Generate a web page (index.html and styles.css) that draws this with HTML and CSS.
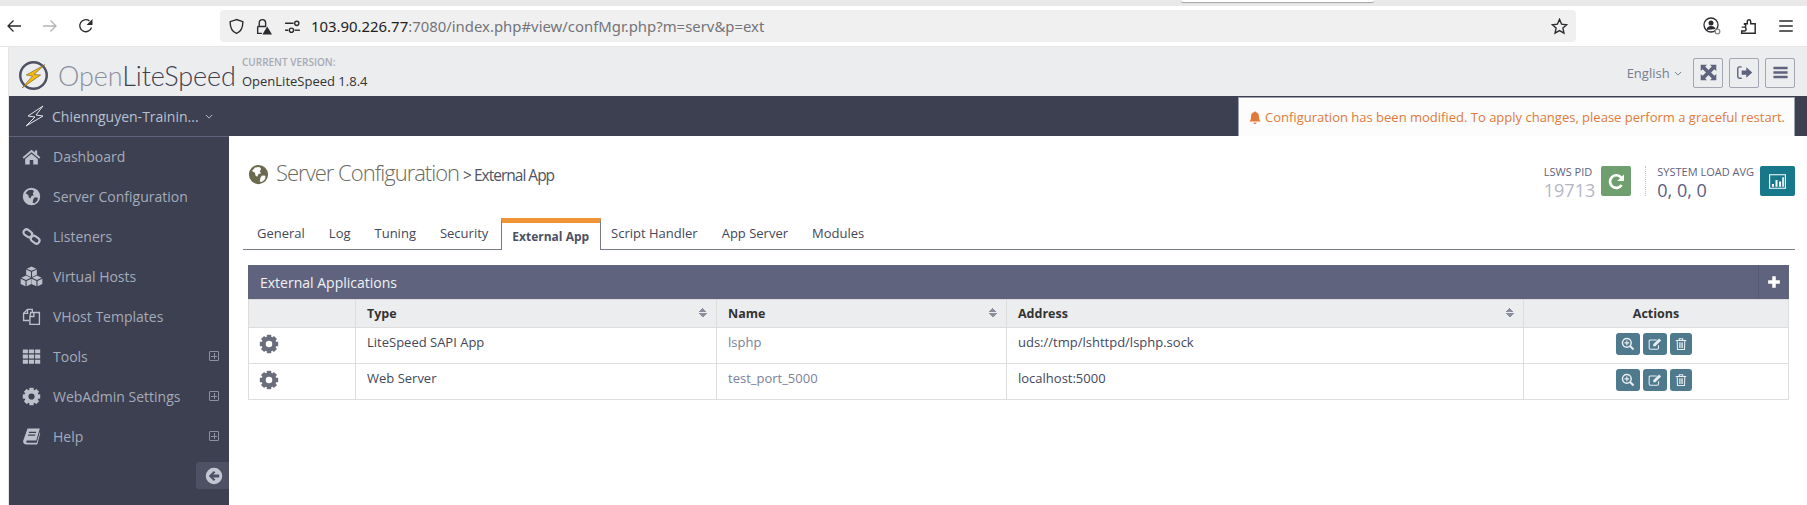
FILE: index.html
```html
<!DOCTYPE html>
<html lang="en">
<head>
    <meta charset="UTF-8">
    <meta name="viewport" content="width=device-width, initial-scale=1.0">
    <title>OpenLiteSpeed WebAdmin</title>
    <link rel="stylesheet" href="styles.css">
</head>
<body>
    <svg class="sprite" xmlns="http://www.w3.org/2000/svg">
        <symbol id="i-home" viewBox="0 0 24 24"><path d="M12 3.500 0.8 13l1.400 1.800L12 6.600l9.800 8.200 1.400-1.800-4-3.400V4.500h-3v2.600z"/><path d="M12 8.600 4 15.300V22h5.800v-5.500h4.400V22H20v-6.700z"/></symbol>
        <symbol id="i-globe" viewBox="0 0 24 24"><path fill-rule="evenodd" d="M12 1a11 11 0 1 0 0 22a11 11 0 0 0 0-22zM8 4l5-.5 2 2-1.500 3 1.500 2-3 1-1.500 3-2-1.500-.5-3-3.500-2zM16 13l4 .5-.5 3.500-3.500 3.500-2.500-.5.5-4z"/></symbol>
        <symbol id="i-link" viewBox="0 0 24 24"><g fill="none" stroke="currentColor" stroke-width="2.800"><rect x="1.500" y="4" width="11.500" height="7.500" rx="3.700" transform="rotate(35 7 8)"/><rect x="11" y="12.500" width="11.500" height="7.500" rx="3.700" transform="rotate(35 17 16)"/></g></symbol>
        <symbol id="i-cubes" viewBox="0 0 24 24"><path d="M12 1.500l5 2.300-5 2.300-5-2.300z"/><path d="M6.400 4.800l5 2.300v5.500l-5-2.400z"/><path d="M17.600 4.800l-5 2.300v5.500l5-2.400z"/><path d="M6.300 11l5 2.300-5 2.300-5-2.300z"/><path d="M.7 14.300l5 2.300v5.500l-5-2.400z"/><path d="M11.900 14.300l-5 2.300v5.500l5-2.400z"/><path d="M17.700 11l5 2.300-5 2.300-5-2.300z"/><path d="M12.100 14.300l5 2.300v5.500l-5-2.400z"/><path d="M23.300 14.300l-5 2.300v5.500l5-2.400z"/></symbol>
        <symbol id="i-files" viewBox="0 0 24 24"><g fill="none" stroke="currentColor" stroke-width="1.700"><path d="M9 17H2V8l5-5h6v4"/><path d="M7 3v5H2"/><path d="M11 7h11v15H10V12z"/><path d="M15 7v5h-5"/></g></symbol>
        <symbol id="i-th" viewBox="0 0 24 24"><path d="M1 3h6.500v5H1zM8.700 3h6.600v5H8.700zM16.500 3H23v5h-6.500zM1 9.500h6.500v5H1zM8.700 9.500h6.600v5H8.700zM16.500 9.500H23v5h-6.500zM1 16h6.500v5H1zM8.700 16h6.600v5H8.700zM16.500 16H23v5h-6.500z"/></symbol>
        <symbol id="i-cog" viewBox="0 0 24 24"><circle cx="12" cy="12" r="6.400" fill="none" stroke="currentColor" stroke-width="5"/><rect x="9.300" y="1" width="5.400" height="5"/><rect x="9.300" y="18" width="5.400" height="5"/><rect x="9.300" y="1" width="5.400" height="5" transform="rotate(45 12 12)"/><rect x="9.300" y="18" width="5.400" height="5" transform="rotate(45 12 12)"/><rect x="9.300" y="1" width="5.400" height="5" transform="rotate(90 12 12)"/><rect x="9.300" y="18" width="5.400" height="5" transform="rotate(90 12 12)"/><rect x="9.300" y="1" width="5.400" height="5" transform="rotate(135 12 12)"/><rect x="9.300" y="18" width="5.400" height="5" transform="rotate(135 12 12)"/></symbol>
        <symbol id="i-book" viewBox="0 0 24 24"><path fill-rule="evenodd" d="M7 2h15.500L18 17H6.500C5 17 5 20 6.500 20H18.500L22.500 6.500 23 8 19.500 21.500c-.2.300-.5.500-1 .5H5C2.500 22 1 20 1.500 17.500zM9 6l-.4 1.500h9L18 6zM8 9.500l-.4 1.500h9l.4-1.500z"/></symbol>
        <symbol id="i-back-circle" viewBox="0 0 24 24"><path fill-rule="evenodd" d="M12 1a11 11 0 1 0 0 22a11 11 0 0 0 0-22zM5 12l6.800-6.800 2 2L10.900 10H19v4h-8.100l2.900 2.800-2 2z"/></symbol>
        <symbol id="i-expand" viewBox="0 0 24 24"><path d="M1 1h9L7.300 3.700 12 8.400 16.700 3.700 14 1h9v9l-2.700-2.700L15.600 12l4.700 4.700L23 14v9h-9l2.700-2.700L12 15.600l-4.700 4.700L10 23H1v-9l2.700 2.700L8.400 12 3.700 7.300 1 10z"/></symbol>
        <symbol id="i-signout" viewBox="0 0 24 24"><path fill="none" stroke="currentColor" stroke-width="2" d="M8 4H5C3.500 4 2.500 5 2.500 6.500v11C2.500 19 3.500 20 5 20h3"/><path d="M8 9h6.500V4.500L23 12l-8.500 7.500V15H8z"/></symbol>
        <symbol id="i-bars" viewBox="0 0 24 24"><path d="M2 4h20v3.500H2zM2 10.300h20v3.500H2zM2 16.600h20v3.500H2z"/></symbol>
        <symbol id="i-bell" viewBox="0 0 24 24"><path d="M12 1.500c1 0 1.700.7 1.700 1.700C17.300 4 18.800 6.800 18.800 10.500c0 4.500 1.200 6.500 3.200 8.500H2c2-2 3.200-4 3.200-8.500 0-3.700 1.500-6.500 5.100-7.300 0-1 .7-1.700 1.700-1.700zM9.300 20.500h5.400a2.700 2.700 0 0 1-5.400 0z"/></symbol>
        <symbol id="i-refresh" viewBox="0 0 24 24"><path fill="none" stroke="currentColor" stroke-width="3.400" d="M18.500 16.500A8 8 0 1 1 18 7"/><path d="M21.500 3v8.500H13z"/></symbol>
        <symbol id="i-chart" viewBox="0 0 24 24"><path fill="none" stroke="currentColor" stroke-width="1.500" d="M2 3.500h20v17H2z"/><path d="M5 15h2.500v3.500H5zM9.500 10h2.500v8.500H9.500zM14 12h2.500v6.500H14zM18 6.500h2v12h-2z"/></symbol>
        <symbol id="i-plus" viewBox="0 0 24 24"><path d="M9 2h6v7h7v6h-7v7H9v-7H2V9h7z"/></symbol>
        <symbol id="i-zoom" viewBox="0 0 24 24"><circle cx="10" cy="10" r="7.500" fill="none" stroke="currentColor" stroke-width="2.500"/><path d="M9 6h2v3h3v2h-3v3H9v-3H6V9h3z"/><path fill="none" stroke="currentColor" stroke-width="3.500" d="M15.500 15.500l6 6"/></symbol>
        <symbol id="i-edit" viewBox="0 0 24 24"><path fill="none" stroke="currentColor" stroke-width="1.800" d="M18 14v5c0 1.200-.8 2-2 2H4c-1.200 0-2-.8-2-2V7c0-1.200.8-2 2-2h11"/><path d="M19 2.500l3.500 3.500-10 10H9v-3.500z"/></symbol>
        <symbol id="i-trash" viewBox="0 0 24 24"><path fill="none" stroke="currentColor" stroke-width="1.800" d="M3 6h18M5.500 6l.5 15.500h12L18.500 6M9 6V3h6v3"/><path d="M9 9h1.500v10H9zM11.300 9h1.500v10h-1.500zM13.500 9H15v10h-1.500z"/></symbol>
    </svg>

    <div class="popup-edge"></div>
    <div class="tabstrip"></div>

    <div class="toolbar">
        <svg class="nav-btn" viewBox="0 0 16 16"><path d="M15 8H2M7.500 2.500 2 8l5.500 5.500"/></svg>
        <svg class="nav-btn nav-off" viewBox="0 0 16 16"><path d="M1 8h13M8.500 2.500 14 8l-5.500 5.500"/></svg>
        <svg class="nav-btn" viewBox="0 0 16 16"><path d="M13.500 9.500A6 6 0 1 1 11.500 3"/><path class="solid" d="M14.500 1v6h-6z"/></svg>
        <div class="urlbar">
            <svg class="url-icon" viewBox="0 0 16 16"><path d="M8 1.500 2 3.500c0 6 1.500 9.300 6 11 4.500-1.700 6-5 6-11z"/></svg>
            <svg class="url-icon" viewBox="0 0 16 16"><path d="M4 8V4.500a3 3 0 0 1 6 0V8M2.500 8h8M2.500 8v6.500h4"/><path class="solid" d="M11.500 8 16 15.500H7z"/></svg>
            <svg class="url-icon url-icon-small" viewBox="0 0 16 16"><path d="M1 5h8M1 11.500h3"/><circle cx="12" cy="5" r="2"/><circle cx="7" cy="11.500" r="2"/><path d="M10 11.500h5"/></svg>
            <span class="url"><b>103.90.226.77</b>:7080/index.php#view/confMgr.php?m=serv&amp;p=ext</span>
            <svg class="url-star" viewBox="0 0 16 16"><path d="M8 1.300l2 4.500 4.800.5-3.600 3.200 1 4.800L8 11.800l-4.200 2.500 1-4.800L1.200 6.300 6 5.800z"/></svg>
        </div>
        <div class="tool-icons">
            <svg class="tool-icon" viewBox="0 0 18 18"><circle cx="8" cy="8" r="7"/><circle class="solid" cx="8" cy="6" r="2.500"/><path class="solid" d="M3.500 13c.5-3 2-4 4.500-4s4 1 4.500 3z"/><circle class="grey" cx="14.500" cy="14.500" r="2.300"/></svg>
            <svg class="tool-icon" viewBox="0 0 16 16"><path d="M1.500 9H4c1.500 0 1.500-2.500 0-2.500V6h2.500V4C6.500 2 9.500 2 9.500 4v2h4v8.500h-12v-2H4c1.800 0 1.800-3.500 0-3.500z"/></svg>
            <svg class="tool-icon" viewBox="0 0 16 16"><path d="M2 3.500h12M2 8h12M2 12.500h12"/></svg>
        </div>
    </div>

    <div class="app">
        <header class="app-header">
            <div class="logo">
                <svg class="logo-mark" viewBox="0 0 30 30">
                    <circle cx="15" cy="15" r="12.800" fill="none" stroke="#4d5163" stroke-width="2.400"/>
                    <path d="M26 4.500 8 14.500l6 1L4 27l18-12.500-6.500-.5z" fill="#f5b90f" stroke="#6b6130" stroke-width=".6"/>
                </svg>
                <span class="logo-text"><span class="logo-light">Open</span>LiteSpeed</span>
            </div>
            <div class="version">
                <div class="version-label">CURRENT VERSION:</div>
                <div class="version-name">OpenLiteSpeed 1.8.4</div>
            </div>
            <div class="header-right">
                <span class="lang">English <svg class="chevron" viewBox="0 0 10 6"><path d="M1 1l4 4 4-4"/></svg></span>
                <button class="head-btn"><svg class="head-icon"><use href="#i-expand"/></svg></button>
                <button class="head-btn"><svg class="head-icon"><use href="#i-signout"/></svg></button>
                <button class="head-btn"><svg class="head-icon"><use href="#i-bars"/></svg></button>
            </div>
        </header>

        <div class="topbar">
            <svg class="server-bolt" viewBox="0 0 20 22"><path d="M18 1 3 11l7 1L1 21l17-10-7-1z"/></svg>
            <span class="server-name">Chiennguyen-Trainin...</span>
            <svg class="chevron server-chevron" viewBox="0 0 10 6"><path d="M1 1l4 4 4-4"/></svg>
            <div class="notice">
                <svg class="notice-bell"><use href="#i-bell"/></svg>
                Configuration has been modified. To apply changes, please perform a graceful restart.
            </div>
        </div>

        <div class="layout">
            <nav class="sidebar">
                <a class="side-item"><svg class="side-icon"><use href="#i-home"/></svg>Dashboard</a>
                <a class="side-item"><svg class="side-icon"><use href="#i-globe"/></svg>Server Configuration</a>
                <a class="side-item"><svg class="side-icon"><use href="#i-link"/></svg>Listeners</a>
                <a class="side-item"><svg class="side-icon side-icon-wide"><use href="#i-cubes"/></svg>Virtual Hosts</a>
                <a class="side-item"><svg class="side-icon"><use href="#i-files"/></svg>VHost Templates</a>
                <a class="side-item"><svg class="side-icon"><use href="#i-th"/></svg>Tools<span class="side-plus"></span></a>
                <a class="side-item"><svg class="side-icon"><use href="#i-cog"/></svg>WebAdmin Settings<span class="side-plus"></span></a>
                <a class="side-item"><svg class="side-icon"><use href="#i-book"/></svg>Help<span class="side-plus"></span></a>
                <div class="collapse"><svg class="collapse-icon"><use href="#i-back-circle"/></svg></div>
            </nav>

            <main class="content">
                <div class="content-head">
                    <h1 class="page-title">
                        <svg class="title-icon"><use href="#i-globe"/></svg>
                        <span>Server Configuration</span>
                        <span class="page-sub">&gt; External App</span>
                    </h1>
                    <div class="stats">
                        <div class="stat">
                            <div class="stat-label">LSWS PID</div>
                            <div class="stat-value stat-pid">19713</div>
                        </div>
                        <button class="stat-btn btn-green"><svg class="stat-icon"><use href="#i-refresh"/></svg></button>
                        <div class="stat stat-load">
                            <div class="stat-label">SYSTEM LOAD AVG</div>
                            <div class="stat-value">0, 0, 0</div>
                        </div>
                        <button class="stat-btn btn-teal"><svg class="stat-icon"><use href="#i-chart"/></svg></button>
                    </div>
                </div>

                <ul class="tabs">
                    <li class="tab">General</li>
                    <li class="tab">Log</li>
                    <li class="tab">Tuning</li>
                    <li class="tab">Security</li>
                    <li class="tab active">External App</li>
                    <li class="tab">Script Handler</li>
                    <li class="tab">App Server</li>
                    <li class="tab">Modules</li>
                </ul>

                <section class="panel">
                    <div class="panel-head">
                        <span class="panel-title">External Applications</span>
                        <span class="panel-add"><svg class="add-icon"><use href="#i-plus"/></svg></span>
                    </div>
                    <table class="grid">
                        <thead>
                            <tr>
                                <th class="col-icon"></th>
                                <th class="col-type">Type<span class="sort"></span></th>
                                <th class="col-name">Name<span class="sort"></span></th>
                                <th class="col-addr">Address<span class="sort"></span></th>
                                <th class="col-actions">Actions</th>
                            </tr>
                        </thead>
                        <tbody>
                            <tr>
                                <td><svg class="row-gear"><use href="#i-cog"/></svg></td>
                                <td>LiteSpeed SAPI App</td>
                                <td class="name-link">lsphp</td>
                                <td>uds://tmp/lshttpd/lsphp.sock</td>
                                <td class="cell-actions">
                                    <button class="act act-wide"><svg class="act-icon"><use href="#i-zoom"/></svg></button>
                                    <button class="act act-wide"><svg class="act-icon"><use href="#i-edit"/></svg></button>
                                    <button class="act"><svg class="act-icon"><use href="#i-trash"/></svg></button>
                                </td>
                            </tr>
                            <tr>
                                <td><svg class="row-gear"><use href="#i-cog"/></svg></td>
                                <td>Web Server</td>
                                <td class="name-link">test_port_5000</td>
                                <td>localhost:5000</td>
                                <td class="cell-actions">
                                    <button class="act act-wide"><svg class="act-icon"><use href="#i-zoom"/></svg></button>
                                    <button class="act act-wide"><svg class="act-icon"><use href="#i-edit"/></svg></button>
                                    <button class="act"><svg class="act-icon"><use href="#i-trash"/></svg></button>
                                </td>
                            </tr>
                        </tbody>
                    </table>
                </section>
            </main>
        </div>
    </div>
</body>
</html>
```

FILE: styles.css
```css
* {
    box-sizing: border-box;
}
html, body {
    height: 100%;
}
body {
    margin: 0;
    display: flex;
    flex-direction: column;
    overflow: hidden;
    background-color: white;
    font-family: "Open Sans", Arial, sans-serif;
    font-size: 13px;
    color: #333;
}
.sprite {
    display: none;
}
button {
    padding: 0;
    border: none;
    font: inherit;
}
svg {
    fill: currentColor;
}

/* browser chrome */
.tabstrip {
    flex: none;
    height: 6px;
    background-color: #e9e9e9;
}
.popup-edge {
    position: absolute;
    left: 1181px;
    top: 0;
    width: 193px;
    height: 2px;
    background: white;
    border-radius: 0 0 3px 3px;
    box-shadow: 0 1px 1px rgba(0,0,0,0.3);
}
.toolbar {
    flex: none;
    display: flex;
    align-items: center;
    height: 41px;
    padding-left: 6px;
    background-color: white;
    border-bottom: 1px solid #e6e6e6;
}
.toolbar svg path, .toolbar svg circle {
    fill: none;
    stroke: #2b2b2f;
    stroke-width: 1.3;
}
.toolbar svg .solid {
    fill: #2b2b2f;
    stroke: none;
}
.toolbar svg .grey {
    fill: white;
    stroke: #888;
}
.nav-btn {
    flex: none;
    width: 16px;
    height: 16px;
    margin-right: 20px;
}
.toolbar .nav-off path {
    stroke: #b4b4b6;
}
.urlbar {
    flex: none;
    display: flex;
    align-items: center;
    width: 1356px;
    height: 32px;
    margin-left: 106px;
    padding: 0 8px;
    background-color: #f0f0f0;
    border-radius: 4px;
}
.url-icon {
    width: 17px;
    height: 17px;
    margin-right: 10px;
}
.url-icon-small {
    margin-left: 2px;
}
.url {
    font-family: "Noto Sans", sans-serif;
    font-size: 14.9px;
    color: #74747a;
    white-space: nowrap;
}
.url b {
    font-weight: normal;
    color: #222;
}
.url-star {
    width: 17px;
    height: 17px;
    margin-left: auto;
}
.tool-icons {
    flex: none;
    display: flex;
    align-items: center;
    gap: 19px;
    margin-left: 127px;
}
.tool-icon {
    width: 18px;
    height: 18px;
}

/* app */
.app {
    flex: 1;
    display: flex;
    flex-direction: column;
    min-height: 0;
    margin-left: 8px;
    border-left: 1px solid #e4e4e4;
}
.app-header {
    flex: none;
    display: flex;
    align-items: center;
    height: 49px;
    background-color: #ecedef;
}
.logo {
    display: flex;
    align-items: center;
    width: 233px;
    padding-left: 9px;
}
.logo-mark {
    width: 31px;
    height: 31px;
    margin-top: 8px;
}
.logo-text {
    margin-left: 9px;
    margin-top: 7px;
    font-family: Lato, sans-serif;
    font-size: 27px;
    font-weight: 300;
    letter-spacing: -0.1px;
    color: #3d4050;
}
.logo-light {
    color: #8b8e9c;
}
.version {
    margin-top: 2px;
}
.version-label {
    font-size: 10px;
    font-weight: 600;
    color: #a7aab4;
    line-height: 14px;
}
.version-name {
    margin-top: 3px;
    font-size: 13px;
    line-height: 18px;
    color: #333;
}
.header-right {
    display: flex;
    align-items: center;
    gap: 6px;
    margin-left: auto;
    padding-right: 12px;
    margin-top: 2px;
}
.lang {
    margin-right: 5px;
    font-size: 13px;
    color: #747d92;
}
.chevron {
    width: 8px;
    height: 5px;
    margin-left: 1px;
    vertical-align: 2px;
}
.chevron path {
    fill: none;
    stroke: currentColor;
    stroke-width: 1.2;
}
.head-btn {
    display: flex;
    align-items: center;
    justify-content: center;
    width: 30px;
    height: 30px;
    background-color: #ecedef;
    border: 1px solid #a4a7b3;
    border-radius: 2px;
    color: #5f637d;
}
.head-icon {
    width: 17px;
    height: 17px;
}
.topbar {
    flex: none;
    display: flex;
    align-items: center;
    height: 40px;
    padding-left: 16px;
    background-color: #3d4050;
}
.server-bolt {
    width: 20px;
    height: 22px;
}
.server-bolt path {
    fill: none;
    stroke: #e4e6ea;
    stroke-width: 1;
}
.server-name {
    margin-left: 7px;
    font-size: 14px;
    color: #b8c0d2;
}
.server-chevron {
    margin-left: 6px;
    color: #b8c0d2;
}
.notice {
    display: flex;
    align-items: center;
    height: 39px;
    margin-left: auto;
    margin-right: 12px;
    margin-top: 1px;
    padding: 0 9px;
    background-color: #fcfcfc;
    border: 1px solid #9fa2b0;
    border-bottom: none;
    font-size: 13px;
    color: #e07a3a;
    white-space: nowrap;
}
.notice-bell {
    width: 14px;
    height: 15px;
    margin-right: 3px;
}
.layout {
    flex: 1;
    display: flex;
    min-height: 0;
}
.sidebar {
    flex: none;
    width: 220px;
    background-color: #3d4050;
    border-top: 1px solid #5f637d;
}
.side-item {
    display: flex;
    align-items: center;
    height: 40px;
    padding-bottom: 2px;
    font-size: 14px;
    color: #a4abbb;
}
.side-icon {
    flex: none;
    width: 19px;
    height: 19px;
    margin: 0 12px 0 13px;
    color: #bcc0cb;
}
.side-icon-wide {
    width: 23px;
    height: 23px;
    margin: 0 10px 0 11px;
}
.side-plus {
    width: 10px;
    height: 10px;
    margin-left: auto;
    margin-right: 10px;
    border: 1px solid #8d92a3;
    border-radius: 1px;
    background:
        linear-gradient(#8d92a3, #8d92a3) center / 6px 1px no-repeat,
        linear-gradient(#8d92a3, #8d92a3) center / 1px 6px no-repeat;
}
.collapse {
    display: flex;
    align-items: center;
    width: 33px;
    height: 27px;
    margin-top: 5px;
    margin-left: auto;
    padding-left: 9px;
    background-color: #4d5163;
    border-radius: 3px 0 0 3px;
    color: #c3c7d1;
}
.collapse-icon {
    width: 18px;
    height: 18px;
}

/* main area */
.content {
    flex: 1;
    min-width: 0;
    padding: 0 12px 0 14px;
}
.content-head {
    display: flex;
    align-items: flex-start;
    justify-content: space-between;
    height: 82px;
}
.page-title {
    display: flex;
    align-items: baseline;
    height: 30px;
    margin: 21px 0 0 5px;
    font-size: 22px;
    font-weight: 300;
    letter-spacing: -1px;
    color: #6b6a5e;
    white-space: nowrap;
}
.title-icon {
    align-self: center;
    width: 21px;
    height: 21px;
    margin-right: 7px;
    margin-top: 4px;
    color: #6b6a4f;
}
.page-sub {
    margin-left: 4px;
    font-size: 15.5px;
    font-weight: 400;
    letter-spacing: -1px;
    color: #4f5363;
}
.stats {
    display: flex;
    align-items: flex-start;
    margin-top: 30px;
}
.stat {
    margin-right: 6px;
}
.stat-load {
    margin-left: 14px;
    padding-left: 11px;
    border-left: 1px dotted #c8c8c8;
    height: 30px;
}
.stat-label {
    font-size: 11px;
    line-height: 12px;
    color: #5f637d;
}
.stat-value {
    font-size: 18px;
    line-height: 24px;
    color: #5c5c85;
}
.stat-pid {
    color: #b4b7c2;
}
.stat-btn {
    display: flex;
    align-items: center;
    justify-content: center;
    height: 30px;
    border-radius: 2px;
    color: white;
}
.btn-green {
    width: 30px;
    background-color: #6f9f6f;
}
.btn-teal {
    width: 35px;
    background-color: #17788c;
}
.stat-icon {
    width: 19px;
    height: 19px;
}
.tabs {
    display: flex;
    height: 32px;
    margin: 0;
    padding: 0 0 0 2px;
    list-style: none;
    border-bottom: 1px solid #777a88;
}
.tab {
    height: 32px;
    padding: 6px 12px 0;
    line-height: 18px;
    color: #43475a;
    white-space: nowrap;
}
.tab.active {
    margin-left: 1px;
    padding: 5px 11px 0 10px;
    background-color: white;
    border-top: 5px solid #ee9336;
    border-left: 1px solid #777a88;
    border-right: 1px solid #777a88;
    font-weight: 700;
    font-size: 12px;
    color: #4d5163;
}
.tab.active + .tab {
    margin-left: -2px;
}
.panel {
    margin: 15px 6px 0 5px;
}
.panel-head {
    display: flex;
    align-items: stretch;
    justify-content: space-between;
    height: 34px;
    background-color: #5f637d;
    color: white;
}
.panel-title {
    padding-left: 12px;
    font-size: 14px;
    line-height: 35px;
    color: #f0f1f4;
}
.panel-add {
    display: flex;
    align-items: center;
    justify-content: center;
    width: 31px;
    border-left: 1px solid #565a72;
}
.add-icon {
    width: 14px;
    height: 14px;
}
.grid {
    width: 100%;
    table-layout: fixed;
    border-collapse: collapse;
}
.grid th, .grid td {
    border: 1px solid #dddddd;
    vertical-align: top;
    text-align: left;
    font-size: 13px;
    padding: 0 11px;
}
.grid th {
    position: relative;
    height: 28px;
    background-color: #ecedef;
    font-size: 12.5px;
    font-weight: 700;
    line-height: 27px;
    color: #333;
}
.grid td {
    height: 36px;
    padding-top: 5px;
    line-height: 18px;
    color: #43475a;
}
.col-icon {
    width: 107px;
}
.col-type {
    width: 361px;
}
.col-name {
    width: 290px;
}
.col-addr {
    width: 517px;
}
.grid .col-actions {
    text-align: center;
}
.sort {
    position: absolute;
    right: 9px;
    top: 8px;
    width: 8px;
    height: 9px;
    background:
        linear-gradient(to bottom right, transparent 50%, #8b8e9c 50%) left top / 4px 4px no-repeat,
        linear-gradient(to bottom left, transparent 50%, #8b8e9c 50%) right top / 4px 4px no-repeat,
        linear-gradient(to top right, transparent 50%, #8b8e9c 50%) left bottom / 4px 4px no-repeat,
        linear-gradient(to top left, transparent 50%, #8b8e9c 50%) right bottom / 4px 4px no-repeat;
}
.grid .name-link {
    color: #7c8199;
}
.row-gear {
    display: block;
    width: 20px;
    height: 20px;
    margin: 1px 0 0 -1px;
    color: #6a6e7c;
}
.grid .cell-actions {
    padding: 5px 15px 0 11px;
    text-align: center;
    font-size: 0;
}
.act {
    display: inline-flex;
    align-items: center;
    justify-content: center;
    width: 22px;
    height: 22px;
    margin: 0 1.5px;
    background-color: #4f7a8e;
    border-radius: 3px;
    color: #e8eef1;
}
.act-wide {
    width: 24px;
}
.act-icon {
    width: 14px;
    height: 14px;
}
```
